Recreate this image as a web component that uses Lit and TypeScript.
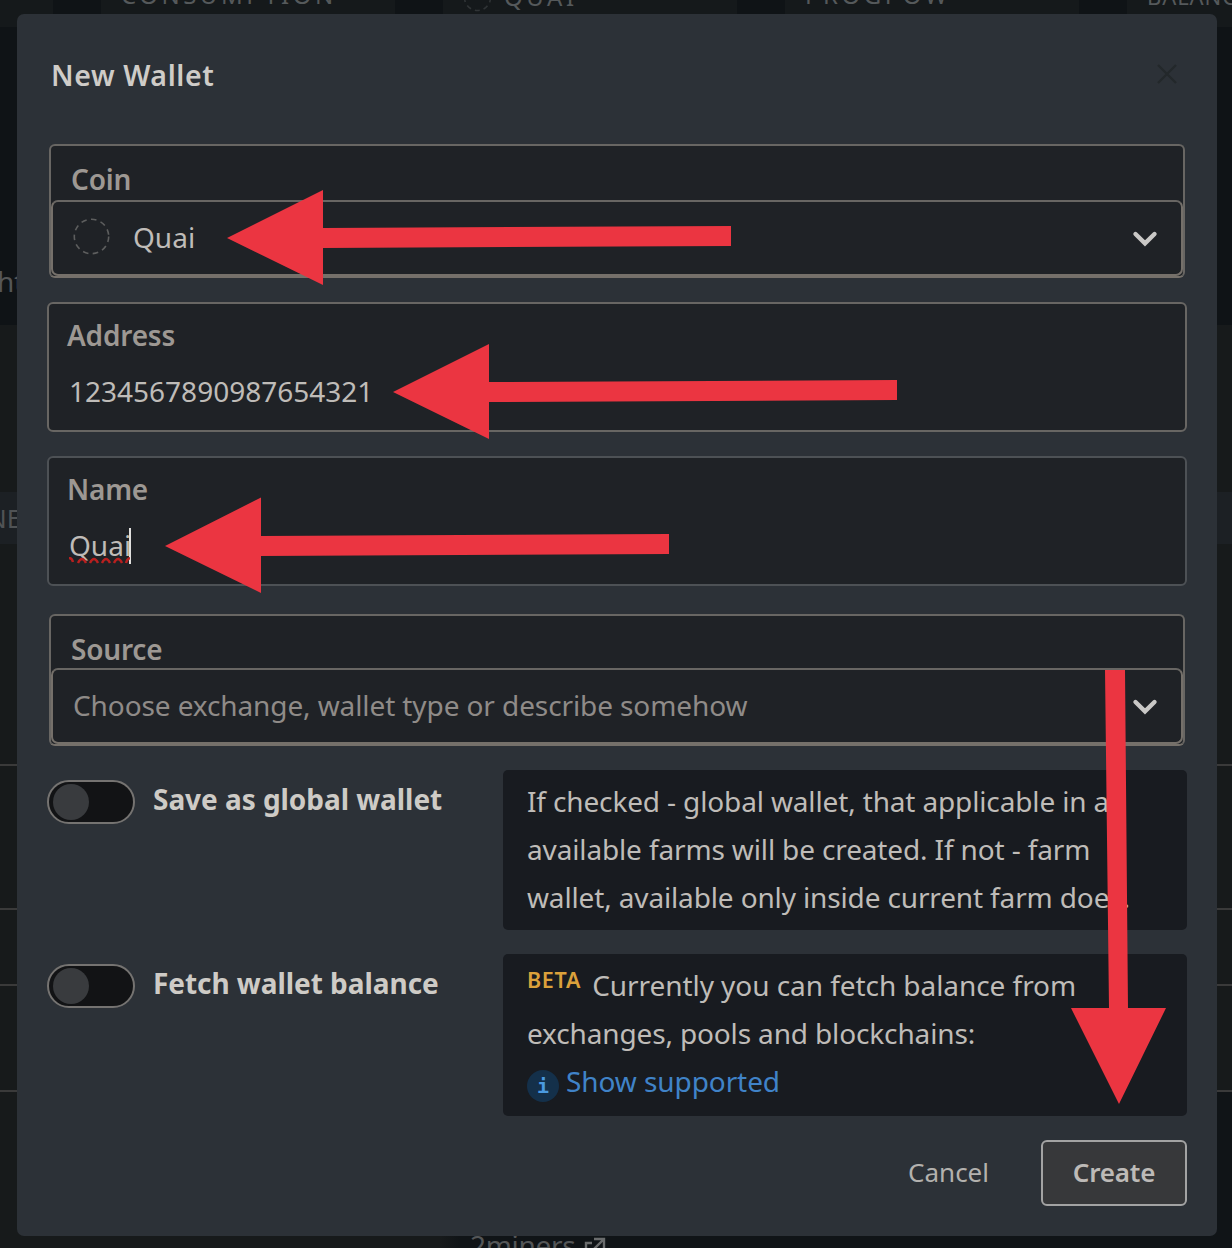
import { LitElement, html, svg, css } from "lit";
import { customElement, property } from "lit/decorators.js";

const chevron = html`<svg class="chevron" viewBox="0 0 26 18" width="26" height="18">
  <path d="M3.5 4L13 13.3L22.5 4" fill="none" stroke="#c9c8c6" stroke-width="4.4" stroke-linecap="round" stroke-linejoin="miter" />
</svg>`;

@customElement("farm-backdrop")
class FarmBackdrop extends LitElement {
  static styles = css`
    :host { display: flex; flex-direction: column; height: 1248px; background: #171a1b; overflow: hidden; }
    .chips { display: flex; height: 27px; background: #0f1316; gap: 48px; flex: none; }
    .chip { background: #15191b; width: 294px; flex: none; display: flex; overflow: hidden; box-sizing: border-box;
      padding-left: 20px; color: #55595b; font-size: 24px; letter-spacing: 3.5px; line-height: 26px; white-space: nowrap; }
    .chip.first { width: 53px; }
    .label { margin-top: -18px; }
    .label.coin { margin-top: -16px; margin-left: 12px; }
    .label.small { font-size: 22px; letter-spacing: 0.9px; margin-top: -17px; }
    .ring { margin-top: -17px; flex: none; }
    .gap { height: 298px; background: #0f1316; flex: none; box-sizing: border-box; padding-top: 237px; }
    .word { color: #545657; font-size: 28px; line-height: 34px; white-space: nowrap; }
    .word.ht { margin-left: -3px; }
    .panel { height: 167px; flex: none; }
    .head { height: 52px; flex: none; background: #1c2024; color: #505355; font-size: 26px; line-height: 52px; }
    .head span { margin-left: -13px; }
    .row { flex: none; box-sizing: border-box; border-bottom: 2px solid #3a3a3a; }
    .r1 { height: 222px; } .r2 { height: 144px; } .r3 { height: 76px; } .r4 { height: 106px; }
    .foot { flex: 1; display: flex; padding: 136px 0 0 470px; background: linear-gradient(90deg, #171a1b 440px, #101417 460px); gap: 9px; }
    .foot .word { letter-spacing: -0.3px; }
    .ext { margin-top: 9px; flex: none; }
  `;
  render() {
    return html`
      <div class="chips">
        <div class="chip first"></div>
        <div class="chip"><span class="label">CONSUMPTION</span></div>
        <div class="chip">
          <svg class="ring" width="29" height="29"><circle cx="14.5" cy="14.5" r="13" fill="none" stroke="#303436" stroke-width="1.6" stroke-dasharray="5 4" /></svg>
          <span class="label coin">QUAI</span>
        </div>
        <div class="chip"><span class="label">PROGPOW</span></div>
        <div class="chip"><span class="label small">BALANCE</span></div>
      </div>
      <div class="gap"><div class="word ht">ht</div></div>
      <div class="panel"></div>
      <div class="head"><span>NE</span></div>
      <div class="row r1"></div>
      <div class="row r2"></div>
      <div class="row r3"></div>
      <div class="row r4"></div>
      <div class="foot">
        <div class="word">2miners</div>
        <svg class="ext" width="22" height="22" viewBox="0 0 22 22" fill="none" stroke="#6a6c6d" stroke-width="2.4">
          <path d="M8 6H2V21H16V14M10 2H20V12M20 2L9 13" />
        </svg>
      </div>
    `;
  }
}

@customElement("toggle-row")
class ToggleRow extends LitElement {
  @property() label = "";
  static styles = css`
    :host { display: flex; align-items: flex-start; }
    .switch { width: 88px; height: 44px; box-sizing: border-box; border: 2px solid #757371; border-radius: 22px;
      background: #121315; padding: 2px 4px; margin-top: 10px; flex: none; }
    .knob { width: 36px; height: 36px; border-radius: 50%; background: #393b3e; }
    .label { margin: 9px 0 0 18px; width: 350px; line-height: 40px; font-weight: 700; letter-spacing: -0.05px; color: #cecbc6; white-space: nowrap; flex: none; }
    .help { flex: 1; box-sizing: border-box; background: #181b20; border-radius: 5px; padding: 7px 0 9px 24px; }
  `;
  render() {
    return html`
      <div class="switch"><div class="knob"></div></div>
      <div class="label">${this.label}</div>
      <div class="help"><slot></slot></div>
    `;
  }
}

@customElement("app-root")
class AppRoot extends LitElement {
  static styles = css`
    :host { display: block; position: relative; width: 1232px; height: 1248px; overflow: hidden;
      font-family: "Noto Sans", "Open Sans", sans-serif; font-size: 28px; color: #bfbcb8; }
    .modal { position: absolute; left: 17px; top: 14px; width: 1200px; height: 1222px; box-sizing: border-box;
      background: #2c3137; border-radius: 7px; padding: 0 30px; display: flex; flex-direction: column; }
    .header { height: 130px; flex: none; display: flex; justify-content: space-between; padding: 41px 7px 0 4px; box-sizing: border-box; }
    .title { font-weight: 600; font-size: 28.5px; letter-spacing: 0.6px; line-height: 40px; color: #cfccc8; }
    .close { margin-top: 7px; }
    .field { box-sizing: border-box; border: 2px solid #686663; border-radius: 6px; background: #1f2226; flex: none; }
    .select { margin: 0 2px; border-bottom-color: #75706a; }
    .select .label { padding-left: 20px; }
    .coin { height: 134px; }
    .coin .label { height: 54px; line-height: 67px; }
    .source { height: 132px; margin-top: 28px; }
    .source .label { height: 52px; line-height: 67px; }
    .label { font-weight: 600; color: #9d9893; letter-spacing: -0.2px; }
    .control { height: 76px; box-sizing: border-box; border: 2px solid #75706a; border-top-color: #686663; border-radius: 7px; display: flex;
      align-items: center; padding: 0 22px 0 20px; }
    .control .value { flex: 1; line-height: 40px; padding-bottom: 2px; }
    .chevron { margin: 2px 1px 0 0; }
    .control .placeholder { color: #8f8b88; letter-spacing: -0.1px; }
    .ring { margin: 0 23px 4px 0; }
    .text { height: 130px; padding: 11px 18px; }
    .text .label { line-height: 40px; }
    .text .value { line-height: 40px; margin-top: 16px; padding-left: 2px; display: flex; align-items: center; }
    .value { color: #bfbcb8; }
    .address { margin-top: 24px; }
    .name { margin-top: 24px; border-color: #4d5155; }
    .typo { position: relative; }
    .squiggle { position: absolute; left: 0; top: 32px; }
    .caret { width: 2px; height: 36px; background: #e0e0de; margin-left: -2px; margin-top: 2px; }
    .toggles { display: flex; flex-direction: column; gap: 24px; margin-top: 24px; flex: none; }
    .line { display: block; line-height: 48px; height: 48px; white-space: nowrap; letter-spacing: -0.14px; }
    .line.wide { letter-spacing: -0.06px; }
    .tall { display: block; height: 146px; }
    .beta { display: inline-block; font-size: 21.5px; font-weight: 600; letter-spacing: 0.7px; color: #dba13b; line-height: 24px; vertical-align: 8px; margin-right: 11px; }
    .link { color: #4083c8; letter-spacing: -0.08px; }
    .info { display: inline-flex; width: 32px; height: 32px; border-radius: 50%; background: #14304a; color: #4a9ae0; align-items: center; justify-content: center;
      font: 700 20px/32px "DejaVu Sans Mono", monospace; vertical-align: -1px; margin: -8px 7px 0 0; }
    .footer { display: flex; justify-content: flex-end; align-items: center; margin-top: 24px; height: 66px; font-size: 26px; flex: none; }
    .cancel { margin: -2px 52px 0 0; color: #b3b1ae; }
    .create { width: 146px; height: 66px; box-sizing: border-box; border: 2px solid #a3a3a3; border-radius: 6px; background: #37383a; color: #bdbab7;
      font-weight: 600; letter-spacing: -0.2px; line-height: 61px; text-align: center; }
    .arrows { position: absolute; left: 0; top: 0; }
  `;

  render() {
    return html`
      <farm-backdrop></farm-backdrop>
      <div class="modal">
        <div class="header">
          <div class="title">New Wallet</div>
          <svg class="close" width="26" height="26" viewBox="0 0 26 26"><path d="M4 3L22 21M22 3L4 21" stroke="#23282b" stroke-width="2.4" /></svg>
        </div>
        <div class="field select coin">
          <div class="label">Coin</div>
          <div class="control">
            <svg class="ring" width="37" height="37"><circle cx="18.5" cy="18.5" r="17.2" fill="none" stroke="#5d5e5e" stroke-width="1.6" stroke-dasharray="5.6 4.4" /></svg>
            <div class="value">Quai</div>
            ${chevron}
          </div>
        </div>
        <div class="field text address">
          <div class="label">Address</div>
          <div class="value">1234567890987654321</div>
        </div>
        <div class="field text name">
          <div class="label">Name</div>
          <div class="value">
            <span class="typo">Quai<svg class="squiggle" width="61" height="7"><path d="M0 1Q3 1 4 5M9 6Q13 -2 17 6M21 6Q25 -2 29 6M33 6Q37 -2 41 6M45 6Q49 -2 53 6M57 6Q58 2 61 1" fill="none" stroke="#b8201f" stroke-width="2.4" /></svg></span>
            <span class="caret"></span>
          </div>
        </div>
        <div class="field select source">
          <div class="label">Source</div>
          <div class="control">
            <div class="value placeholder">Choose exchange, wallet type or describe somehow</div>
            ${chevron}
          </div>
        </div>
        <div class="toggles">
          <toggle-row label="Save as global wallet">
            <span class="line">If checked - global wallet, that applicable in all</span>
            <span class="line">available farms will be created. If not - farm</span>
            <span class="line">wallet, available only inside current farm does.</span>
          </toggle-row>
          <toggle-row label="Fetch wallet balance">
            <div class="tall">
              <span class="line wide"><span class="beta">BETA</span>Currently you can fetch balance from</span>
              <span class="line">exchanges, pools and blockchains:</span>
              <span class="line link"><span class="info">i</span>Show supported</span>
            </div>
          </toggle-row>
        </div>
        <div class="footer">
          <div class="cancel">Cancel</div>
          <div class="create">Create</div>
        </div>
      </div>
      <svg class="arrows" width="1232" height="1248" fill="#eb3541">
        ${[
          "227,238 323,190 323,228 731,226 731,246 323,248 323,285",
          "393,392 489,344 489,382 897,380 897,400 489,402 489,439",
          "165,546 261,497.5 261,536 669,534 669,554 261,556 261,593",
          "1105,670 1125,670 1128,1008 1166,1008 1119,1104 1071,1008 1109,1008",
        ].map((p) => svg`<polygon points=${p} />`)}
      </svg>
    `;
  }
}
